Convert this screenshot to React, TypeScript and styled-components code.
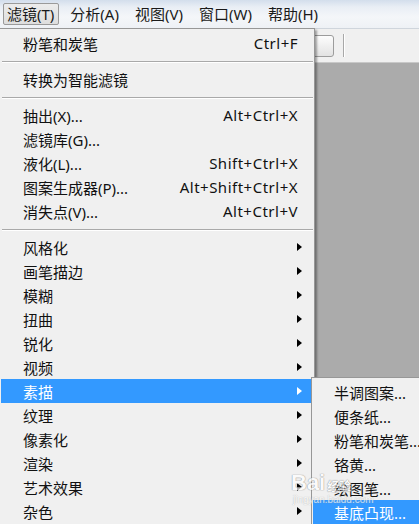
import React from "react";
import styled, { createGlobalStyle } from "styled-components";

const Global = createGlobalStyle`
  html, body { margin: 0; padding: 0; width: 100%; height: 100%; overflow: hidden; }
  body { font-family: "Noto Sans", "Noto Sans CJK SC", sans-serif; }
  #root { width: 100%; height: 100%; }
`;

const Page = styled.div`
  position: relative;
  width: 419px;
  height: 524px;
  display: flex;
  flex-direction: column;
  background: #ababab;
  overflow: hidden;
  font-family: "Noto Sans", "Noto Sans CJK SC", sans-serif;
  font-size: 15px;
  color: #111;
`;

const MenuBar = styled.div`
  height: 28px;
  flex: none;
  display: flex;
  align-items: center;
  gap: 7px;
  padding-left: 3px;
  background: linear-gradient(#d3deec 0%, #e9eef5 25%, #f4f6f9 60%, #eef1f5 100%);
  border-bottom: 1px solid #cfd5dc;
`;

const BarItem = styled.div<{ $active?: boolean }>`
  height: 22px;
  display: flex;
  align-items: center;
  padding: 0 4px 1px 3px;
  box-sizing: border-box;
  border-radius: 2px;
  border: 1px solid ${(p) => (p.$active ? "#9a9a9a" : "transparent")};
  background: ${(p) => (p.$active ? "linear-gradient(#ececec, #dedede)" : "transparent")};
  color: #1a1a1a;
  white-space: nowrap;
`;

const Toolbar = styled.div`
  height: 33px;
  flex: none;
  display: flex;
  align-items: center;
  gap: 9px;
  padding-left: 280px;
  background: #f0f0f0;
  border-bottom: 1px solid #c8c8c8;
`;

const ToolButton = styled.div`
  width: 52px;
  height: 20px;
  border: 1px solid #9c9c9c;
  border-radius: 3px;
  background: linear-gradient(#fdfdfd, #e2e2e2);
`;

const ToolSep = styled.div`
  width: 1px;
  height: 23px;
  background: #a8a8a8;
  box-shadow: 1px 0 0 #ffffff;
`;

const Workspace = styled.div`
  flex: 1;
  background: #ababab;
`;

const Dropdown = styled.div`
  position: absolute;
  left: 0;
  top: 28px;
  width: 315px;
  bottom: -20px;
  background: #f0f0f0;
  border: 1px solid #979797;
  border-left: none;
  padding-top: 2px;
  box-sizing: border-box;
  box-shadow: 2px 2px 2px rgba(0, 0, 0, 0.35);
`;

const Item = styled.div<{ $hl?: boolean }>`
  height: 24px;
  display: flex;
  align-items: center;
  padding: 0 10px 0 22px;
  margin-left: 1px;
  margin-right: 2px;
  background: ${(p) => (p.$hl ? "#3399ff" : "transparent")};
  color: ${(p) => (p.$hl ? "#ffffff" : "#111111")};
  white-space: nowrap;
`;

const Label = styled.span`
  flex: 1;
`;

const Shortcut = styled.span`
  padding-right: 4px;
  letter-spacing: 0.5px;
`;

const Arrow = styled.span<{ $hl?: boolean }>`
  width: 0;
  height: 0;
  border-top: 4.5px solid transparent;
  border-bottom: 4.5px solid transparent;
  border-left: 5px solid ${(p) => (p.$hl ? "#ffffff" : "#000000")};
`;

const Sep = styled.div`
  height: 12px;
  display: flex;
  align-items: center;
  padding: 0 1px 0 2px;
  &::after {
    content: "";
    flex: 1;
    height: 1px;
    background: #a9a9a9;
    box-shadow: 0 1px 0 #ffffff;
  }
`;

const Submenu = styled.div`
  position: absolute;
  left: 311px;
  top: 377px;
  width: 130px;
  height: 160px;
  background: #f0f0f0;
  border: 1px solid #979797;
  padding-top: 2px;
  box-sizing: border-box;
`;

const SubItem = styled.div<{ $hl?: boolean }>`
  height: 24px;
  display: flex;
  align-items: center;
  padding-left: 21px;
  margin-left: 1px;
  background: ${(p) => (p.$hl ? "#3399ff" : "transparent")};
  color: ${(p) => (p.$hl ? "#ffffff" : "#111111")};
  white-space: nowrap;
`;

const Watermark = styled.div`
  position: absolute;
  left: 291px;
  top: 472px;
  pointer-events: none;
  display: flex;
  flex-direction: column;
  opacity: 0.7;
`;

const WmTop = styled.div`
  display: flex;
  align-items: flex-end;
  gap: 2px;
  font-family: "Liberation Sans", Arial, sans-serif;
  font-weight: bold;
  font-size: 22px;
  line-height: 22px;
  color: #ffffff;
  text-shadow: 0 0 1px #777, 0 0 1px #777;
`;

const WmCn = styled.span`
  font-family: "Noto Sans CJK SC", sans-serif;
  font-size: 12px;
  line-height: 16px;
`;

const WmSmall = styled.div`
  font-family: "Liberation Sans", Arial, sans-serif;
  font-size: 10px;
  line-height: 11px;
  color: #ffffff;
  text-shadow: 0 0 1px #888;
  padding-left: 2px;
`;

type Entry =
  | { kind: "item"; label: string; shortcut?: string; arrow?: boolean; hl?: boolean }
  | { kind: "sep" };

const entries: Entry[] = [
  { kind: "item", label: "粉笔和炭笔", shortcut: "Ctrl+F" },
  { kind: "sep" },
  { kind: "item", label: "转换为智能滤镜" },
  { kind: "sep" },
  { kind: "item", label: "抽出(X)...", shortcut: "Alt+Ctrl+X" },
  { kind: "item", label: "滤镜库(G)..." },
  { kind: "item", label: "液化(L)...", shortcut: "Shift+Ctrl+X" },
  { kind: "item", label: "图案生成器(P)...", shortcut: "Alt+Shift+Ctrl+X" },
  { kind: "item", label: "消失点(V)...", shortcut: "Alt+Ctrl+V" },
  { kind: "sep" },
  { kind: "item", label: "风格化", arrow: true },
  { kind: "item", label: "画笔描边", arrow: true },
  { kind: "item", label: "模糊", arrow: true },
  { kind: "item", label: "扭曲", arrow: true },
  { kind: "item", label: "锐化", arrow: true },
  { kind: "item", label: "视频", arrow: true },
  { kind: "item", label: "素描", arrow: true, hl: true },
  { kind: "item", label: "纹理", arrow: true },
  { kind: "item", label: "像素化", arrow: true },
  { kind: "item", label: "渲染", arrow: true },
  { kind: "item", label: "艺术效果", arrow: true },
  { kind: "item", label: "杂色", arrow: true },
];

const subItems = ["半调图案...", "便条纸...", "粉笔和炭笔...", "铬黄...", "绘图笔...", "基底凸现..."];

const barItems = ["滤镜(T)", "分析(A)", "视图(V)", "窗口(W)", "帮助(H)"];

export default function App() {
  return (
    <Page>
      <Global />
      <MenuBar>
        {barItems.map((b, i) => (
          <BarItem key={b} $active={i === 0}>
            {b}
          </BarItem>
        ))}
      </MenuBar>
      <Toolbar>
        <ToolButton />
        <ToolSep />
      </Toolbar>
      <Workspace />
      <Dropdown>
        {entries.map((e, i) =>
          e.kind === "sep" ? (
            <Sep key={i} />
          ) : (
            <Item key={i} $hl={e.hl}>
              <Label>{e.label}</Label>
              {e.shortcut && <Shortcut>{e.shortcut}</Shortcut>}
              {e.arrow && <Arrow $hl={e.hl} />}
            </Item>
          )
        )}
      </Dropdown>
      <Submenu>
        {subItems.map((s, i) => (
          <SubItem key={s} $hl={i === subItems.length - 1}>
            {s}
          </SubItem>
        ))}
      </Submenu>
      <Watermark>
        <WmTop>
          Bai<WmCn>经验</WmCn>
        </WmTop>
        <WmSmall>jingyan.baidu.com</WmSmall>
      </Watermark>
    </Page>
  );
}
